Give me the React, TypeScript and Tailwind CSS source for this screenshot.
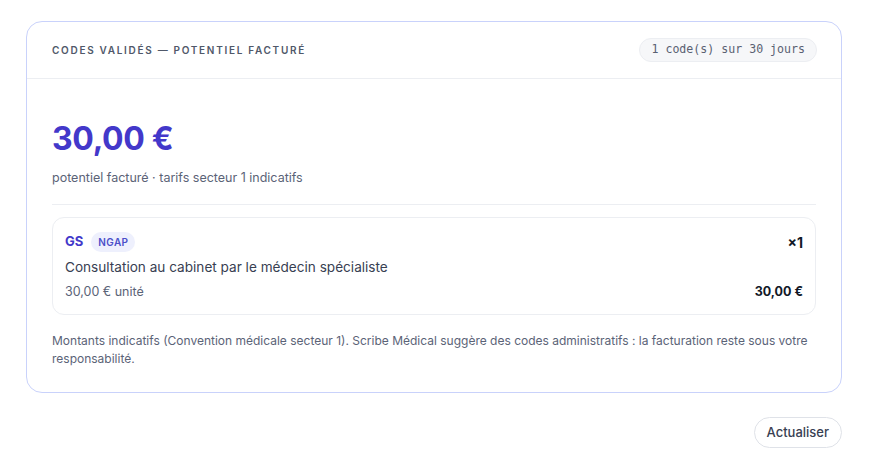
export default function App() {
  const items = [
    {
      code: 'GS',
      nomenclature: 'NGAP',
      label: 'Consultation au cabinet par le médecin spécialiste',
      unit: '30,00 € unité',
      qty: '×1',
      total: '30,00 €',
    },
  ];

  return (
    <div className="min-h-screen bg-white font-['Inter','Liberation_Sans',sans-serif] text-slate-700">
      <div className="ml-[26px] w-[816px] pt-[21px]">
        <section className="rounded-[16px] border border-[#c9d2fb] bg-white">
          <header className="flex h-[57px] items-center justify-between border-b border-[#eceef2] pl-[25px] pr-[24px]">
            <h2 className="text-[10px] font-semibold uppercase tracking-[0.17em] text-[#505869]">
              Codes validés — potentiel facturé
            </h2>
            <span className="flex h-[24px] items-center rounded-full border border-[#eceef2] bg-[#f6f7f9] px-[11px] font-['DejaVu_Sans_Mono','Liberation_Mono',monospace] text-[11.6px] text-[#5a6172]">
              1 code(s) sur 30 jours
            </span>
          </header>

          <div className="px-[25px] pb-[24px] pt-[40px]">
            <p className="text-[32px] font-bold leading-[40px] tracking-[-0.01em] text-[#4338ca]">30,00 €</p>
            <p className="mt-[11px] text-[12.5px] leading-[16px] text-[#5b6377]">
              potentiel facturé · tarifs secteur 1 indicatifs
            </p>
            <div className="mt-[18px] border-t border-[#eceef2]" />

            <div className="mt-[12px] space-y-2">
              {items.map((item) => (
                <div key={item.code} className="rounded-[12px] border border-[#eceef2] px-[12px] pb-[12px] pt-[14px]">
                  <div className="flex h-[20px] items-center justify-between">
                    <div className="flex items-center gap-[8px]">
                      <span className="text-[13px] font-bold text-[#4338ca]">{item.code}</span>
                      <span className="flex h-[20px] items-center rounded-full bg-[#eef0fd] px-[7px] text-[10px] font-semibold tracking-[0.04em] text-[#4a4fc9]">
                        {item.nomenclature}
                      </span>
                    </div>
                    <span className="text-[14px] font-bold text-[#111827]">{item.qty}</span>
                  </div>
                  <p className="mt-[5px] text-[13.6px] leading-[20px] text-[#384052]">{item.label}</p>
                  <div className="mt-[5px] flex items-center justify-between leading-[20px]">
                    <span className="text-[12.5px] text-[#5b6377]">{item.unit}</span>
                    <span className="text-[12.5px] font-bold text-[#111827]">{item.total}</span>
                  </div>
                </div>
              ))}
            </div>

            <p className="mt-[17px] text-[12px] leading-[18px] text-[#5b6377]">
              Montants indicatifs (Convention médicale secteur 1). Scribe Médical suggère des codes administratifs : la facturation reste sous votre responsabilité.
            </p>
          </div>
        </section>

        <div className="mt-[24px] flex justify-end">
          <button
            className="h-[31px] rounded-full border border-[#dfe2e8] bg-white px-[12px] text-[13px] font-medium text-[#384052]"
            type="button"
          >
            Actualiser
          </button>
        </div>
      </div>
    </div>
  );
}
